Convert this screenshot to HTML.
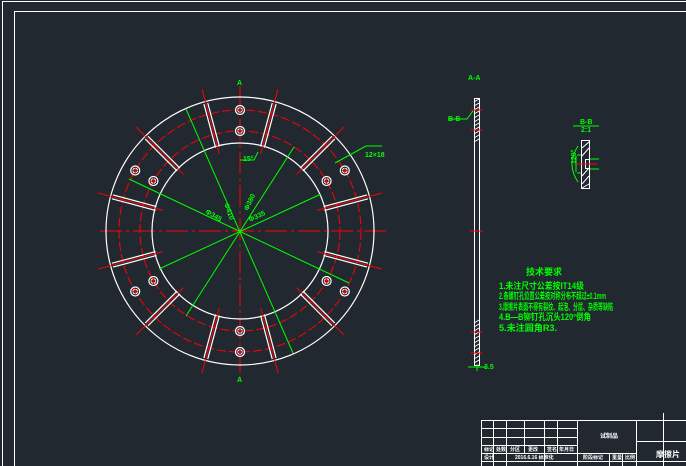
<!DOCTYPE html>
<html><head><meta charset="utf-8"><style>
html,body{margin:0;padding:0;background:#212830;}
svg{display:block}
text{font-family:"Liberation Sans","Noto Sans CJK SC",sans-serif;}
</style></head><body>
<svg id="s" width="686" height="466" viewBox="0 0 686 466" xmlns="http://www.w3.org/2000/svg">
<rect width="686" height="466" fill="#212830"/>
<path d="M2.5 466V1.5H686" stroke="#fff" stroke-width="1" fill="none"/>
<path d="M14.5 466V11.5H686" stroke="#fff" stroke-width="1" fill="none"/>
<g id="disc"></g>
<g stroke="#fff" fill="none" stroke-width="1">
<rect x="474.5" y="98.5" width="5" height="267"/>
<path d="M474 102l5-3M474 106l5-3M474 110l5-3M474 114l5-3M474 118l5-3M474 122l5-3M474 126l5-3M474 130l5-3M474 134l5-3M474 138l5-3M474 142l5-3"/>
<path d="M474 323l5-3M474 327l5-3M474 331l5-3M474 335l5-3M474 339l5-3M474 343l5-3M474 347l5-3M474 351l5-3M474 355l5-3M474 359l5-3M474 363l5-3"/>
</g>
<g stroke="#f00" stroke-width="1">
<path d="M471 110h11M471 130h11M470 231h13M471 332h11M471 353h11"/>
</g>
<g fill="#0f0" font-size="7" font-weight="bold">
<text x="468" y="80">A-A</text>
<text x="448" y="121">B-B</text>
<text x="484" y="369">3.5</text>
</g>
<path d="M448 119h19l6-8M468 367h18M477 364v7" stroke="#0f0" fill="none"/>
<g stroke="#fff" fill="none">
<rect x="581.5" y="140.5" width="8" height="48"/>
<path d="M582 148l7-6M582 156l7-8M582 176l7-8M582 184l7-8M582 188l7-4"/>
<rect x="585.5" y="159.5" width="4" height="9"/>
</g>
<path d="M577 164h20" stroke="#f00"/>
<g stroke="#0f0" fill="none">
<path d="M573 126h26"/>
<path d="M578 146q-12 18 0 36M577 155h4M577 173h4M576 156v16M590 159h9M590 169h9"/>
</g>
<g fill="#0f0" font-size="7" font-weight="bold">
<text x="580" y="124">B-B</text>
<text x="581" y="132">2:1</text>
<text x="570" y="170" transform="rotate(-90 570 164)">120°</text>
</g>
<g fill="#0f0" font-size="9" font-weight="bold">
<text x="526" y="275">技术要求</text>
<text x="499" y="289" textLength="85" lengthAdjust="spacingAndGlyphs">1.未注尺寸公差按IT14级</text>
<text x="499" y="299" textLength="107" lengthAdjust="spacingAndGlyphs">2.各螺钉孔位置公差按对称分布不超过±0.1mm</text>
<text x="499" y="310" textLength="114" lengthAdjust="spacingAndGlyphs">3.摩擦片表面不得有裂纹、起泡、分层、杂质等缺陷</text>
<text x="499" y="320" textLength="92" lengthAdjust="spacingAndGlyphs">4.B—B铆钉孔沉头120°倒角</text>
<text x="499" y="331" textLength="58" lengthAdjust="spacingAndGlyphs">5.未注圆角R3.</text>
</g>
<g stroke="#fff" fill="none" stroke-width="1">
<path d="M481.5 466V420.5H686"/>
<path d="M481 428.5h96M481 437.5h96M481 445.5h96M481 453.5h96M481 461.5h205"/>
<path d="M493.5 420v46M506.5 420v46M524.5 420v33M544.5 420v46M557.5 420v33M577.5 420v46M636.5 420v46M663.5 413v53M636 441.5h50"/>
<path d="M609.5 453v13M622.5 453v13M577 453.5h59"/>
</g>
<g fill="#fff" font-size="5" font-weight="bold">
<text x="600" y="438" font-size="6">试制品</text>
<text x="656" y="457" font-size="8">摩擦片</text>
<text x="484" y="451">标记</text><text x="496" y="451">处数</text><text x="510" y="451">分区</text><text x="528" y="451">更改</text><text x="547" y="451">签名</text><text x="559" y="451">年月日</text>
<text x="484" y="459">设计</text><text x="515" y="459">2016.6.16 标准化</text>
<text x="583" y="459">阶段标记</text><text x="612" y="459">重量</text><text x="625" y="459">比例</text>
</g>
</svg>
<script>
(function(){
var g=document.getElementById('disc'),ns='http://www.w3.org/2000/svg',cx=240,cy=231;
function el(t,a){var e=document.createElementNS(ns,t);for(var k in a)e.setAttribute(k,a[k]);g.appendChild(e);return e;}
el('path',{d:'M100 231H390',stroke:'#f00','stroke-dasharray':'22 4 3 4',fill:'none'});
el('path',{d:'M240 86V378',stroke:'#f00','stroke-dasharray':'22 4 3 4',fill:'none'});
el('circle',{cx:cx,cy:cy,r:134,stroke:'#fff',fill:'none','stroke-width':1.2});
el('circle',{cx:cx,cy:cy,r:88,stroke:'#fff',fill:'none','stroke-width':1.2});
el('circle',{cx:cx,cy:cy,r:121,stroke:'#f00',fill:'none','stroke-dasharray':'9 3'});
el('circle',{cx:cx,cy:cy,r:100,stroke:'#f00',fill:'none','stroke-dasharray':'9 3'});
for(var i=0;i<12;i++){var a=(15+30*i)*Math.PI/180,c=Math.cos(a),s=-Math.sin(a),px=-s,py=c;
 [-2,2].forEach(function(o){el('line',{x1:cx+c*87+px*o,y1:cy+s*87+py*o,x2:cx+c*132+px*o,y2:cy+s*132+py*o,stroke:'#fff','stroke-width':1.2});});
 el('line',{x1:cx+c*80,y1:cy+s*80,x2:cx+c*147,y2:cy+s*147,stroke:'#f00'});
}
[30,90,150,210,270,330].forEach(function(d){var a=d*Math.PI/180;[121,100].forEach(function(r){var x=cx+r*Math.cos(a),y=cy-r*Math.sin(a);
 el('circle',{cx:x,cy:y,r:4.5,stroke:'#fff',fill:'none','stroke-width':1.2});
 el('circle',{cx:x,cy:y,r:2.3,stroke:'#fff',fill:'none'});
 el('path',{d:'M'+(x-3)+' '+y+'h6M'+x+' '+(y-3)+'v6',stroke:'#f00','stroke-width':0.8});});});
[[186,109,293,353],[129,179,349,283],[159,269,321,194],[186,316,294,147]].forEach(function(l){el('line',{x1:l[0],y1:l[1],x2:l[2],y2:l[3],stroke:'#0f0'});});
el('path',{d:'M335 163l31-17h16',stroke:'#0f0',fill:'none'});
el('path',{d:'M240 160h14l4 -8',stroke:'#0f0',fill:'none'});
var t=[[365,157,'12×18',0],[243,161,'15°',0],[224,204,'Φ410',70],[205,213,'Φ345',30],[248,211,'Φ380',-65],[250,222,'Φ335',-25],[237,85,'A',0],[237,382,'A',0]];
t.forEach(function(q){var e=el('text',{x:q[0],y:q[1],fill:'#0f0','font-size':7,'font-weight':'bold',transform:'rotate('+q[3]+' '+q[0]+' '+q[1]+')'});e.textContent=q[2];});
})();
</script>
</body></html>
